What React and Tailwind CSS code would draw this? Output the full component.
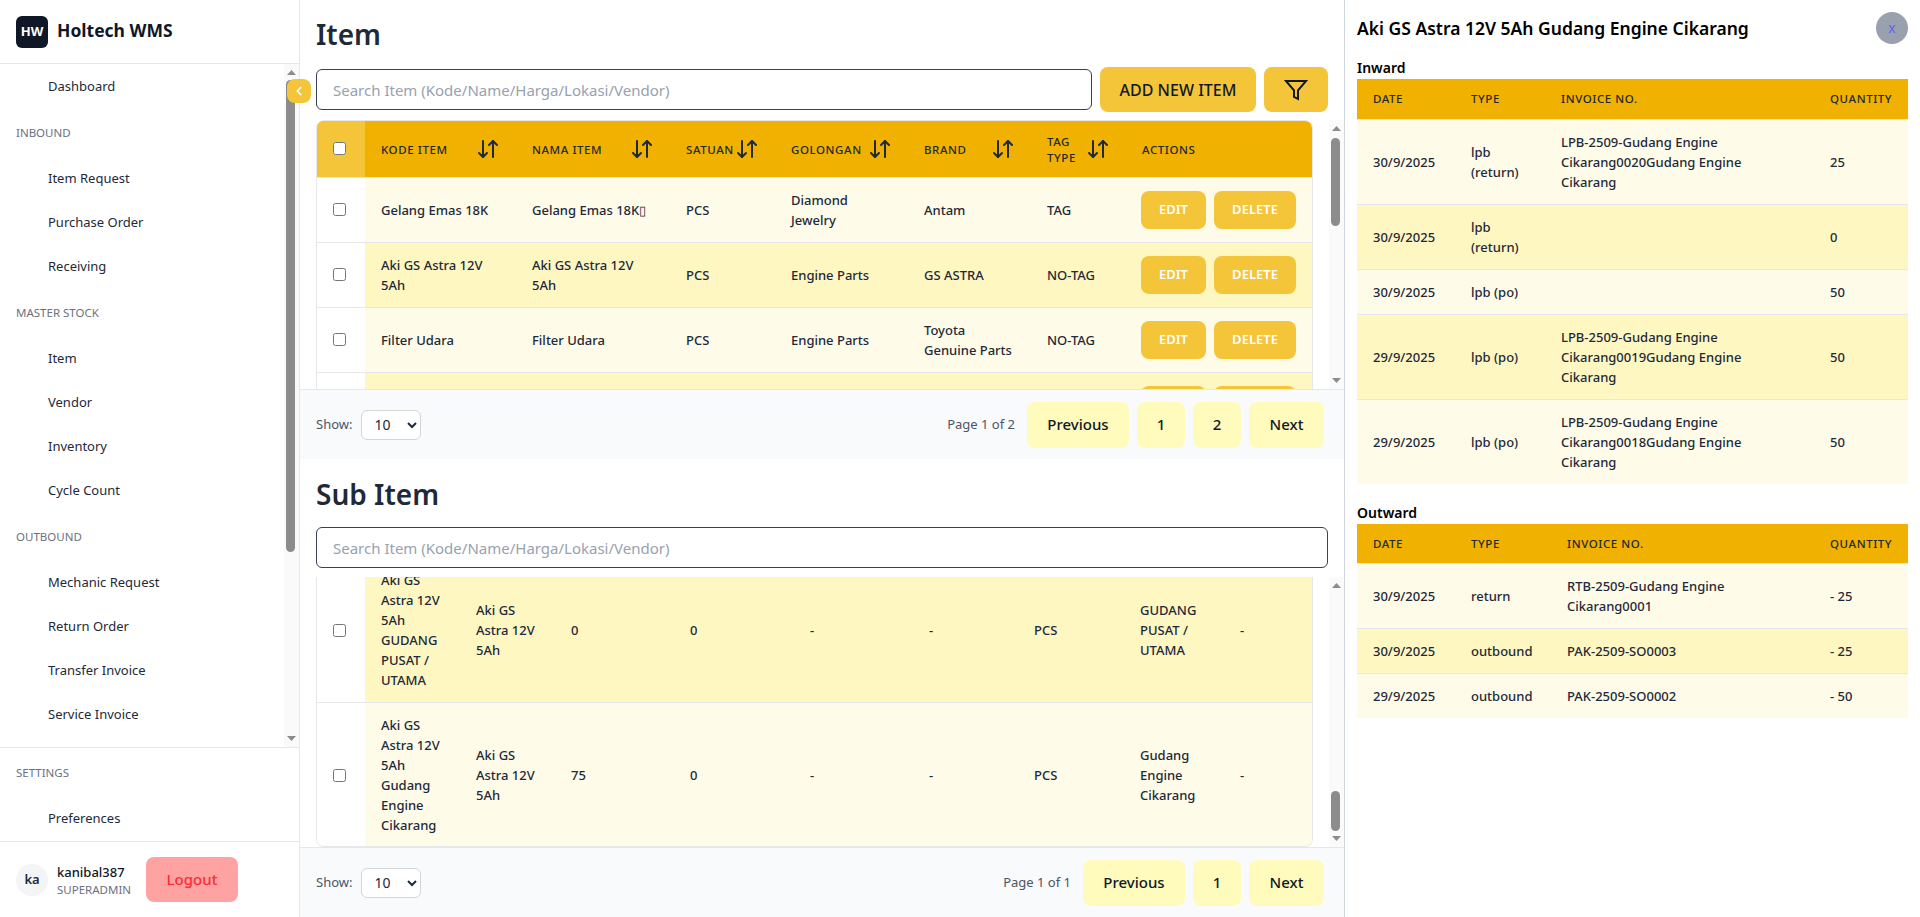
import React from 'react';
import { ArrowDownUp, ChevronLeft } from 'lucide-react';

const navTop = [
  { items: ['Dashboard'] },
  { label: 'INBOUND', items: ['Item Request', 'Purchase Order', 'Receiving'] },
  { label: 'MASTER STOCK', items: ['Item', 'Vendor', 'Inventory', 'Cycle Count'] },
  { label: 'OUTBOUND', items: ['Mechanic Request', 'Return Order', 'Transfer Invoice', 'Service Invoice'] },
];

// last row is almost fully scrolled out of view, only the button tops show
const itemRows = [
  ['Gelang Emas 18K', 'Gelang Emas 18K\u25AF', 'PCS', 'Diamond Jewelry', 'Antam', 'TAG'],
  ['Aki GS Astra 12V 5Ah', 'Aki GS Astra 12V 5Ah', 'PCS', 'Engine Parts', 'GS ASTRA', 'NO-TAG'],
  ['Filter Udara', 'Filter Udara', 'PCS', 'Engine Parts', 'Toyota Genuine Parts', 'NO-TAG'],
  ['', '', '', '', '', ''],
];

const subRows = [
  ['Aki GS Astra 12V 5Ah GUDANG PUSAT / UTAMA', 'Aki GS Astra 12V 5Ah', '0', '0', '-', '-', 'PCS', 'GUDANG PUSAT / UTAMA', '-'],
  ['Aki GS Astra 12V 5Ah Gudang Engine Cikarang', 'Aki GS Astra 12V 5Ah', '75', '0', '-', '-', 'PCS', 'Gudang Engine Cikarang', '-'],
];

const inward = [
  ['30/9/2025', 'lpb (return)', 'LPB-2509-Gudang Engine Cikarang0020Gudang Engine Cikarang', '25'],
  ['30/9/2025', 'lpb (return)', '', '0'],
  ['30/9/2025', 'lpb (po)', '', '50'],
  ['29/9/2025', 'lpb (po)', 'LPB-2509-Gudang Engine Cikarang0019Gudang Engine Cikarang', '50'],
  ['29/9/2025', 'lpb (po)', 'LPB-2509-Gudang Engine Cikarang0018Gudang Engine Cikarang', '50'],
];

const outward = [
  ['30/9/2025', 'return', 'RTB-2509-Gudang Engine Cikarang0001', '- 25'],
  ['30/9/2025', 'outbound', 'PAK-2509-SO0003', '- 25'],
  ['29/9/2025', 'outbound', 'PAK-2509-SO0002', '- 50'],
];

const rowBg = (i) => (i % 2 === 0 ? 'bg-[#fefce8]' : 'bg-[#fef7c2]');

function Arrow({ up }) {
  return (
    <svg width="9" height="5" viewBox="0 0 9 5" className="block fill-[#8c8c8c]">
      <polygon points={up ? '4.5,0 9,5 0,5' : '0,0 9,0 4.5,5'} />
    </svg>
  );
}

// fake scrollbar, the page itself doesn't scroll in the picture
function Scrollbar({ thumbTop, thumbHeight }) {
  return (
    <div className="absolute top-0 bottom-0 right-0 w-[15px] bg-[#fafafa]">
      <div className="absolute top-[6px] left-[3px]"><Arrow up /></div>
      <div
        className="absolute left-[2px] w-[9px] rounded-full bg-[#8c8c8c]"
        style={{ top: thumbTop, height: thumbHeight }}
      />
      <div className="absolute bottom-[6px] left-[3px]"><Arrow /></div>
    </div>
  );
}

function Sidebar() {
  return (
    <aside className="relative w-[300px] h-full shrink-0 flex flex-col border-r border-gray-200 bg-white">
      <div className="h-[64px] shrink-0 flex items-center gap-[9px] px-4 border-b border-gray-200">
        <div className="w-8 h-8 rounded-md bg-[#101828] text-white text-[13px] font-bold flex items-center justify-center">HW</div>
        <span className="text-[17.5px] font-bold text-[#101828] -mt-[2px]">Holtech WMS</span>
      </div>
      <div className="relative h-[683px] shrink-0 overflow-hidden">
        <nav>
          {navTop.map((group, i) => (
            <div key={i}>
              {group.label && (
                <div className="pt-[17px] pb-[15px] pl-4 text-[11.5px] leading-4 text-gray-500">{group.label}</div>
              )}
              {group.items.map((item) => (
                <div key={item} className="py-3 pl-12 text-[13px] leading-5 text-gray-800">{item}</div>
              ))}
            </div>
          ))}
        </nav>
        <Scrollbar thumbTop={16} thumbHeight={472} />
      </div>
      <div className="h-[94px] shrink-0 border-t border-gray-200">
        <div className="pt-[17px] pb-[15px] pl-4 text-[11.5px] leading-4 text-gray-500">SETTINGS</div>
        <div className="py-3 pl-12 text-[13px] leading-5 text-gray-800">Preferences</div>
      </div>
      <div className="flex-1 flex items-center px-4 border-t border-gray-200">
        <div className="w-8 h-8 rounded-full bg-gray-100 text-[13px] font-semibold text-gray-800 flex items-center justify-center">ka</div>
        <div className="ml-[9px] w-[89px]">
          <div className="text-[13px] leading-5 font-medium text-gray-900">kanibal387</div>
          <div className="text-[11.5px] leading-4 text-gray-500">SUPERADMIN</div>
        </div>
        <button className="w-[92px] h-[45px] rounded-lg bg-red-300 text-red-500 text-[15px] font-medium">Logout</button>
      </div>
      <button className="absolute left-[287px] top-[79px] w-6 h-6 rounded-lg bg-[#f4c439] text-white flex items-center justify-center">
        <ChevronLeft size={14} strokeWidth={3} />
      </button>
    </aside>
  );
}

function SearchInput({ className }) {
  return (
    <input
      placeholder="Search Item (Kode/Name/Harga/Lokasi/Vendor)"
      className={`h-[41px] px-4 text-[15px] rounded-md border border-gray-700 bg-white outline-none placeholder:text-gray-400 ${className}`}
    />
  );
}

function HeadCell({ children, sort = true }) {
  return (
    <th className="px-4 text-left text-[11.5px] leading-4 font-medium uppercase tracking-wider text-gray-800">
      <div className="flex items-center justify-between">
        <span className="pt-[2px]">{children}</span>
        {sort && <ArrowDownUp size={24} className="shrink-0 text-gray-800" />}
      </div>
    </th>
  );
}

function PageButton({ label }) {
  const width = label === 'Previous' ? 'w-[102px]' : label === 'Next' ? 'w-[75px]' : 'w-[48px]';
  return (
    <button className={`${width} h-[46px] rounded-lg bg-[#fffbbc] text-[15px] font-medium text-gray-900`}>{label}</button>
  );
}

function Pager({ label, pages }) {
  return (
    <div className="h-[70px] shrink-0 flex items-center justify-between pl-4 pr-5 bg-gray-50 border-t border-gray-200">
      <div className="flex items-center gap-[9px]">
        <span className="text-[13px] text-gray-600">Show:</span>
        <select className="w-[60px] h-[30px] pl-2 text-sm text-gray-800 rounded-md border border-gray-300 bg-white">
          <option>10</option>
        </select>
      </div>
      <div className="flex items-center gap-2">
        <span className="mr-1 text-[13px] text-gray-600">{label}</span>
        {['Previous', ...pages, 'Next'].map((p) => <PageButton key={p} label={p} />)}
      </div>
    </div>
  );
}

function ItemSection() {
  const widths = [48, 151, 154, 105, 133, 123, 95, 186];
  return (
    <section className="h-[459px] shrink-0 flex flex-col">
      <h1 className="pt-4 px-4 text-[28px] leading-9 font-semibold text-gray-800">Item</h1>
      <div className="flex items-center gap-2 mt-[15px] px-4">
        <SearchInput className="flex-1" />
        <button className="w-[156px] h-[45px] rounded-lg bg-[#f4c439] text-base font-medium text-gray-900">ADD NEW ITEM</button>
        <button className="w-16 h-[45px] rounded-lg bg-[#f4c439] flex items-center justify-center text-gray-900">
          <svg width="24" height="24" viewBox="0 0 24 24" fill="none" stroke="currentColor" strokeWidth="2">
            <polygon points="22 3 2 3 10 12.46 10 19 14 21 14 12.46 22 3" />
          </svg>
        </button>
      </div>
      <div className="relative flex-1 min-h-0 mt-2 pl-4 pr-[31px] overflow-hidden">
        <div className="rounded-lg border border-gray-200 overflow-hidden">
          <table className="w-full table-fixed border-collapse">
            <colgroup>
              {widths.map((w, i) => <col key={i} style={{ width: w }} />)}
            </colgroup>
            <thead>
              <tr className="h-[56px] bg-yellow-500">
                <th className="pl-4 text-left bg-[#f4c439]"><input type="checkbox" className="block" /></th>
                <HeadCell>Kode Item</HeadCell>
                <HeadCell>Nama Item</HeadCell>
                <HeadCell>Satuan</HeadCell>
                <HeadCell>Golongan</HeadCell>
                <HeadCell>Brand</HeadCell>
                <HeadCell>Tag Type</HeadCell>
                <HeadCell sort={false}>Actions</HeadCell>
              </tr>
            </thead>
            <tbody>
              {itemRows.map((row, i) => (
                <tr key={i} className="border-t border-gray-200">
                  <td className="pl-4 bg-white">{row[0] && <input type="checkbox" className="block" />}</td>
                  {row.map((c, j) => (
                    <td key={j} className={`px-4 py-3 text-[13px] leading-5 font-medium text-gray-800 ${rowBg(i)}`}>{c}</td>
                  ))}
                  <td className={`pl-[15px] py-[13px] ${rowBg(i)}`}>
                    <div className="flex gap-2">
                      <button className="w-[65px] h-[38px] rounded-lg bg-[#f4c439] text-[13px] font-semibold text-white">{row[0] && 'EDIT'}</button>
                      <button className="w-[82px] h-[38px] rounded-lg bg-[#f4c439] text-[13px] font-semibold text-white">{row[0] && 'DELETE'}</button>
                    </div>
                  </td>
                </tr>
              ))}
            </tbody>
          </table>
        </div>
        <Scrollbar thumbTop={18} thumbHeight={88} />
      </div>
      <Pager label="Page 1 of 2" pages={['1', '2']} />
    </section>
  );
}

function SubItemSection() {
  const widths = [48, 95, 95, 119, 120, 119, 105, 106, 100, 89];
  return (
    <section className="flex-1 min-h-0 flex flex-col">
      <h1 className="pt-[17px] px-4 text-[28px] leading-9 font-semibold text-gray-800">Sub Item</h1>
      <div className="mt-[15px] px-4 flex">
        <SearchInput className="flex-1" />
      </div>
      <div className="relative flex-1 min-h-0 mt-[9px] pl-4 pr-[31px] overflow-hidden">
        <div className="h-full rounded-b-lg border-x border-b border-gray-200 overflow-hidden">
          <table className="w-full table-fixed border-collapse -mt-5">
            <colgroup>
              {widths.map((w, i) => <col key={i} style={{ width: w }} />)}
            </colgroup>
            <tbody>
              {subRows.map((row, i) => (
                <tr key={i} className="border-t border-gray-200">
                  <td className="pl-4 bg-white"><input type="checkbox" className="block" /></td>
                  {row.map((c, j) => (
                    <td key={j} className={`px-4 py-3 text-[13px] leading-5 font-medium text-gray-800 ${i === 0 ? 'bg-[#fef7c2]' : 'bg-[#fefce8]'}`}>{c}</td>
                  ))}
                </tr>
              ))}
            </tbody>
          </table>
        </div>
        <Scrollbar thumbTop={214} thumbHeight={40} />
      </div>
      <Pager label="Page 1 of 1" pages={['1']} />
    </section>
  );
}

function HistoryTable({ rows, widths }) {
  return (
    <table className="w-full table-fixed border-collapse">
      <colgroup>
        {widths.map((w, i) => <col key={i} style={{ width: w }} />)}
      </colgroup>
      <thead>
        <tr className="h-10 bg-yellow-500">
          {['Date', 'Type', 'Invoice No.', 'Quantity'].map((h) => (
            <th key={h} className="px-4 text-left text-[11.5px] font-medium uppercase tracking-wider text-gray-800">{h}</th>
          ))}
        </tr>
      </thead>
      <tbody>
        {rows.map((row, i) => (
          <tr key={i} className={`border-t border-gray-200 ${rowBg(i)}`}>
            {row.map((c, j) => (
              <td key={j} className="px-4 py-3 text-[13px] leading-5 font-medium text-gray-800">{c}</td>
            ))}
          </tr>
        ))}
      </tbody>
    </table>
  );
}

function DetailPanel() {
  return (
    <aside className="w-[576px] h-full shrink-0 border-l border-gray-300 bg-white px-3">
      <div className="flex items-center justify-between h-[56px]">
        <h2 className="text-[17.5px] font-semibold text-black">Aki GS Astra 12V 5Ah Gudang Engine Cikarang</h2>
        <button className="w-8 h-8 rounded-full bg-gray-400 text-sm text-[#5b63f5]">x</button>
      </div>
      <h3 className="h-[23px] text-sm leading-6 font-semibold text-black">Inward</h3>
      <HistoryTable rows={inward} widths={[98, 90, 269, 94]} />
      <h3 className="mt-[17px] h-[23px] text-sm leading-6 font-semibold text-black">Outward</h3>
      <HistoryTable rows={outward} widths={[98, 96, 263, 94]} />
    </aside>
  );
}

export default function App() {
  return (
    <div className="h-screen w-full flex overflow-hidden bg-white font-['Noto_Sans',sans-serif]">
      <Sidebar />
      <main className="flex-1 min-w-0 h-full flex flex-col">
        <ItemSection />
        <SubItemSection />
      </main>
      <DetailPanel />
    </div>
  );
}
